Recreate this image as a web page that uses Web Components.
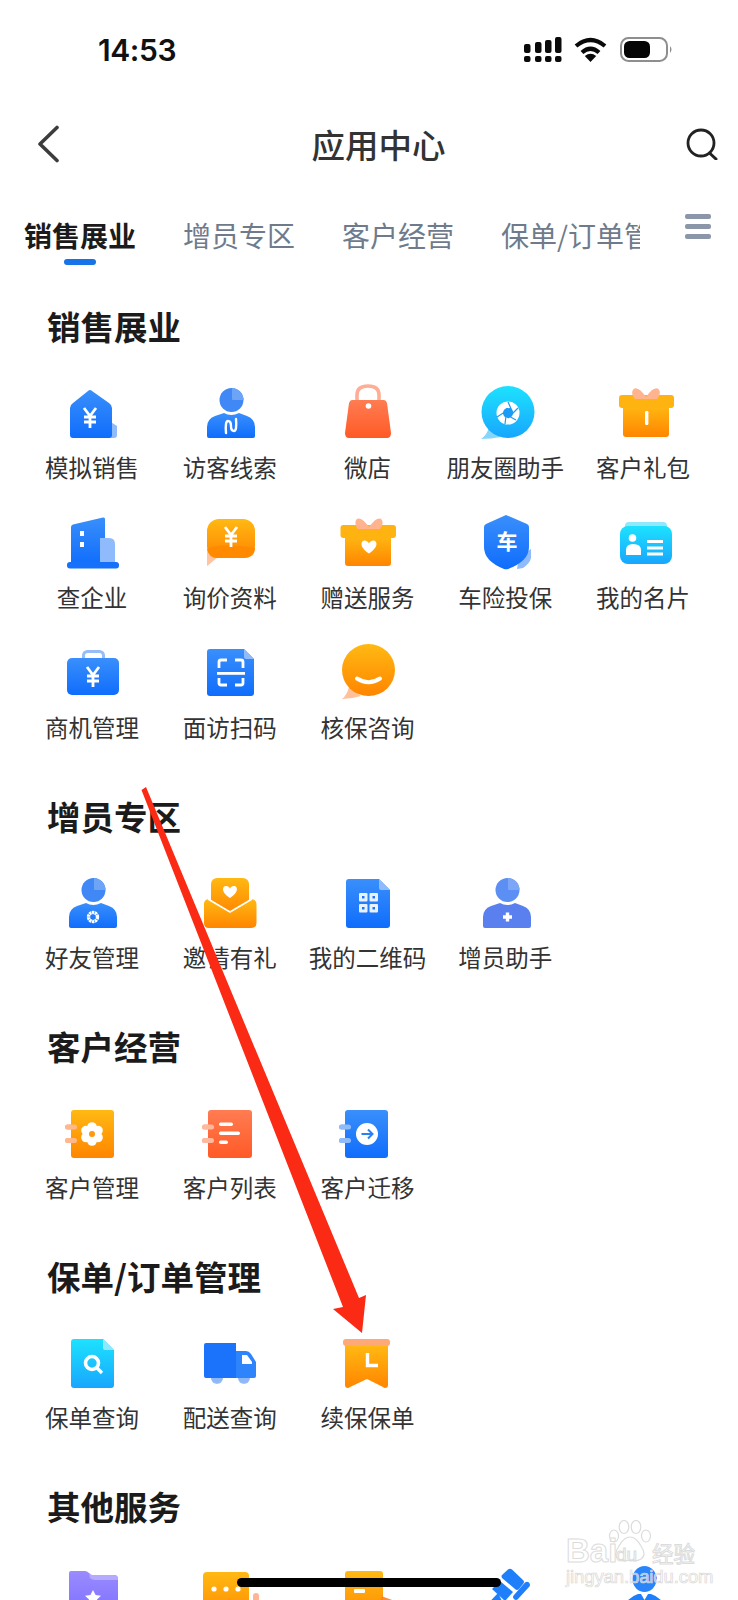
<!DOCTYPE html>
<html lang="zh-CN">
<head>
<meta charset="utf-8">
<title>应用中心</title>
<style>
  html, body { margin: 0; padding: 0; background: #fff; }
  body { width: 738px; height: 1600px; overflow: hidden; position: relative; font-family: "Noto Sans CJK SC", "Noto Sans", sans-serif; }
</style>
</head>
<body>
<app-status-bar time="14:53"></app-status-bar>
<app-nav heading="应用中心"></app-nav>
<app-tabs></app-tabs>

<app-section heading="销售展业">
  <app-item label="模拟销售" icon="house"></app-item>
  <app-item label="访客线索" icon="visitor"></app-item>
  <app-item label="微店" icon="bag"></app-item>
  <app-item label="朋友圈助手" icon="lens"></app-item>
  <app-item label="客户礼包" icon="gift"></app-item>
  <app-item label="查企业" icon="building"></app-item>
  <app-item label="询价资料" icon="quote"></app-item>
  <app-item label="赠送服务" icon="giftHeart"></app-item>
  <app-item label="车险投保" icon="shield"></app-item>
  <app-item label="我的名片" icon="card"></app-item>
  <app-item label="商机管理" icon="case"></app-item>
  <app-item label="面访扫码" icon="scan"></app-item>
  <app-item label="核保咨询" icon="smile"></app-item>
</app-section>
<app-section heading="增员专区">
  <app-item label="好友管理" icon="friend"></app-item>
  <app-item label="邀请有礼" icon="invite"></app-item>
  <app-item label="我的二维码" icon="qr"></app-item>
  <app-item label="增员助手" icon="recruit"></app-item>
</app-section>
<app-section heading="客户经营">
  <app-item label="客户管理" icon="noteGear"></app-item>
  <app-item label="客户列表" icon="noteList"></app-item>
  <app-item label="客户迁移" icon="noteMove"></app-item>
</app-section>
<app-section heading="保单/订单管理">
  <app-item label="保单查询" icon="policy"></app-item>
  <app-item label="配送查询" icon="truck"></app-item>
  <app-item label="续保保单" icon="renew"></app-item>
</app-section>
<app-section heading="其他服务">
  <app-item icon="folder"></app-item>
  <app-item icon="message"></app-item>
  <app-item icon="box"></app-item>
  <app-item icon="gavel"></app-item>
  <app-item icon="advisor"></app-item>
</app-section>

<app-arrow></app-arrow>
<app-watermark></app-watermark>
<app-home-bar></app-home-bar>

<script>
const defs = `<defs>
  <linearGradient id="b" x1="0" y1="0" x2="0" y2="1"><stop offset="0" stop-color="#3a8ffb"/><stop offset="1" stop-color="#0f6dfb"/></linearGradient>
  <linearGradient id="o" x1="0" y1="0" x2="0" y2="1"><stop offset="0" stop-color="#ffb913"/><stop offset="1" stop-color="#ff8500"/></linearGradient>
  <linearGradient id="c" x1="0" y1="0" x2="0" y2="1"><stop offset="0" stop-color="#1de2ff"/><stop offset="1" stop-color="#18a6fd"/></linearGradient>
  <linearGradient id="r" x1="0" y1="0" x2="0" y2="1"><stop offset="0" stop-color="#ff7c52"/><stop offset="1" stop-color="#ff5a26"/></linearGradient>
  <linearGradient id="p" x1="0" y1="0" x2="0" y2="1"><stop offset="0" stop-color="#9a8bff"/><stop offset="1" stop-color="#7a6cff"/></linearGradient>
</defs>`;

const yen = (x, y) => `<path d="M${x - 6} ${y - 10}L${x} ${y - 2}L${x + 6} ${y - 10}M${x - 6} ${y - 1}H${x + 6}M${x - 6} ${y + 4}H${x + 6}M${x} ${y - 2}V${y + 10}" fill="none" stroke="#fff" stroke-width="2.8"/>`;
const heart = (x, y, s) => `<path d="M${x} ${y + s * .85}C${x - s * 1.5} ${y - s * .1} ${x - s} ${y - s} ${x - s * .45} ${y - s * .85}C${x - s * .2} ${y - s * .8} ${x} ${y - s * .55} ${x} ${y - s * .45}C${x} ${y - s * .55} ${x + s * .2} ${y - s * .8} ${x + s * .45} ${y - s * .85}C${x + s} ${y - s} ${x + s * 1.5} ${y - s * .1} ${x} ${y + s * .85}Z" fill="#fff"/>`;
const head = (fill, pale) => `<ellipse cx="31.5" cy="19" rx="12" ry="12" fill="${fill}"/><path d="M32 7A12 12 0 0 1 43.5 19H33Q32 19 32 18Z" fill="${pale}"/>`;
const torso = fill => `<path d="M7 57V46Q7 38 15 35L24 32Q31 36 39 32L47 35Q55 38 55 46V55Q55 57 53 57H9Q7 57 7 55Z" fill="${fill}"/>`;
const paleBow = `<path d="M33 16Q24 4 20 9Q18 13 22 18H44Q48 13 46 9Q42 4 33 16Z" fill="#ffb48f"/>`;
const lid = `<rect x="4" y="14" width="55" height="13" rx="3" fill="#ffb311"/>`;
const ring = (c, x) => `<rect x="${x}" y="23.5" width="12" height="5" rx="2.5" fill="${c}"/><rect x="${x}" y="37" width="12" height="5" rx="2.5" fill="${c}"/>`;
const docBody = (grad, pale, x1, x2) => `<path d="M${x1 + 3} 8H${x2 - 11}L${x2} 19V54Q${x2} 57 ${x2 - 3} 57H${x1 + 3}Q${x1} 57 ${x1} 54V11Q${x1} 8 ${x1 + 3} 8Z" fill="url(#${grad})"/><path d="M${x2 - 11} 8L${x2} 19H${x2 - 9}Q${x2 - 11} 19 ${x2 - 11} 17Z" fill="${pale}"/>`;

const icons = {
  house: `<path d="M44 38L55 45V54Q55 57 52 57H44Z" fill="#8fbafb"/><path d="M26 10Q28 8 30 10L47 22Q50 24 50 27V54Q50 57 47 57H11Q8 57 8 54V27Q8 24 11 22Z" fill="url(#b)"/>${yen(28, 37)}`,
  visitor: `${head('#3f88f6', '#6da4f6')}${torso('url(#b)')}<path d="M26 52Q25 40 28 40Q31 40 31 45Q31 50 34 50Q37 50 36 38" fill="none" stroke="#fff" stroke-width="2.4" stroke-linecap="round"/>`,
  bag: `<path d="M20 24V14Q20 5 31 5Q42 5 42 14V24" fill="none" stroke="#ffae96" stroke-width="3.6"/><path d="M15 19H47Q49 19 50 22L54 52Q54 57 50 57H12Q8 57 8 52L12 22Q13 19 15 19Z" fill="url(#r)"/><circle cx="31.5" cy="25" r="2.8" fill="#fff"/>`,
  lens: `<path d="M6 58Q12 54 14 46L26 56Q16 58 6 58Z" fill="#86d6fb"/><ellipse cx="33" cy="31" rx="26.5" ry="26" fill="url(#c)"/><circle cx="33" cy="32" r="11.5" fill="#fff"/><circle cx="33" cy="32" r="5" fill="#1a9bf5"/><path d="M33 21L38 32M43 27L33 37M41 39L28 32M30 43L32 27M22 36L36 27" stroke="#1a9bf5" stroke-width="1.2" fill="none"/>`,
  gift: `${paleBow}<rect x="10" y="24" width="46" height="32" rx="3" fill="url(#o)"/><rect x="6" y="14" width="55" height="13" rx="3" fill="#ffb311"/>${paleBow}<rect x="32" y="30" width="3.4" height="14" rx="1.2" fill="#fff"/>`,
  building: `<path d="M9 16Q9 14 11 13.5L41 6.5Q43 6 43 8V54H9Z" fill="url(#b)"/><path d="M38 27H47Q53 27 53 33V54H38Z" fill="#8fbafb"/><rect x="5" y="51" width="52" height="6.5" rx="3" fill="#1570fb"/><rect x="18" y="20" width="4" height="5" fill="#fff"/><rect x="18" y="31" width="4" height="5" fill="#fff"/>`,
  quote: `<path d="M7 38L7 55Q8 54.500 18 46Z" fill="#ffc4a0"/><rect x="7" y="8" width="48" height="39" rx="12" fill="url(#o)"/><path d="M7 38Q20 31 55 37Q55 47 43 47H17Q9 47 7 38Z" fill="#ff8a00"/>${yen(31, 26)}`,
  giftHeart: `<rect x="8" y="24" width="46" height="31" rx="3" fill="url(#o)"/><rect x="3.500" y="14" width="55.500" height="13" rx="3" fill="#ffb311"/><path d="M32 16Q23 4 19 9Q17 13 21 18H43Q47 13 45 9Q41 4 32 16Z" fill="#ffb48f"/>${heart(32, 36, 7.5)}`,
  shield: `<path d="M44 46L56 38V47Q55 52 48 57L42 58Z" fill="#8fbafb"/><path d="M31 4L52 13Q54 14 54 16V36Q54 50 33 58Q31 58.500 29 58Q9 50 9 36V16Q9 14 11 13Z" fill="url(#b)"/><text x="32" y="38" text-anchor="middle" font-family="Noto Sans CJK SC" font-weight="700" font-size="21" fill="#fff">车</text>`,
  card: `<rect x="12" y="11" width="42" height="10" rx="4" fill="#8fe8fc"/><rect x="7" y="15" width="52" height="38" rx="8" fill="url(#c)"/><circle cx="19.500" cy="27" r="3.800" fill="#fff"/><path d="M13 44V39Q13 33 20 33Q28 33 28 39V44Z" fill="#fff"/><rect x="34" y="29" width="16" height="3" fill="#fff"/><rect x="34" y="35.500" width="16" height="3" fill="#fff"/><rect x="34" y="41.500" width="16" height="3" fill="#fff"/>`,
  case: `<rect x="21.500" y="10.500" width="20" height="12" rx="4" fill="none" stroke="#96bdf8" stroke-width="3"/><rect x="5" y="17" width="52" height="37" rx="5" fill="url(#b)"/>${yen(31, 36)}`,
  scan: `<path d="M10 8H44L54 18V52Q54 55 51 55H10Q7 55 7 52V11Q7 8 10 8Z" fill="url(#b)"/><path d="M44 8L54 18H46Q44 18 44 16Z" fill="#8fbafb"/><path d="M19 27V21Q19 19 21 19H27M35 19H41Q43 19 43 21V27M19 37V42Q19 44 21 44H27M35 44H41Q43 44 43 42V37" fill="none" stroke="#fff" stroke-width="2.800"/><rect x="17" y="31" width="28" height="2.800" fill="#fff"/>`,
  smile: `<path d="M5 58Q10 54 12 46L24 55Q14 58 5 58Z" fill="#ffc09a"/><ellipse cx="31.500" cy="29" rx="26.500" ry="26" fill="url(#o)"/><path d="M20 37.500Q31.500 45 43 37.500" fill="none" stroke="#fff" stroke-width="4" stroke-linecap="round"/>`,
  friend: `${head('#3f88f6', '#6da4f6')}${torso('url(#b)')}<circle cx="31" cy="46" r="4.500" fill="none" stroke="#fff" stroke-width="3.400" stroke-dasharray="2.300 .5"/>`,
  invite: `<rect x="11" y="7" width="38" height="36" rx="6" fill="url(#o)"/>${heart(30, 21, 7)}<path d="M4 33Q4 29 8 28L30 40.500L52 28Q56.500 29 56.500 33V52Q56.500 57 51 57H9Q4 57 4 52Z" fill="url(#o)"/><path d="M8 28L30 41L52 28" fill="none" stroke="#fff" stroke-width="1.800"/>`,
  qr: `${docBody('b', '#8fbafb', 9, 53)}<g fill="#e8f2ff"><rect x="22" y="22" width="8.500" height="8.500" rx="1"/><rect x="32.500" y="22" width="8.500" height="8.500" rx="1"/><rect x="22" y="33" width="8.500" height="8.500" rx="1"/><rect x="32.500" y="33" width="8.500" height="8.500" rx="1"/></g><g fill="#1c74fb"><rect x="25" y="25" width="2.500" height="2.500"/><rect x="35.500" y="25" width="2.500" height="2.500"/><rect x="25" y="36" width="2.500" height="2.500"/><rect x="35.500" y="36" width="2.500" height="2.500"/></g>`,
  recruit: `<g transform="translate(1)">${head('#5c8ff4', '#7da6f6')}${torso('#5a80f0')}</g><path d="M32.500 41.500V50.500M28 46H37" stroke="#fff" stroke-width="3.400"/>`,
  noteGear: `${ring('#ffb88c', 3)}<rect x="9" y="9" width="43" height="48" rx="3" fill="url(#o)"/>${ring('#ffb88c', 3)}<g fill="#fff"><circle cx="30" cy="26" r="4.800"/><circle cx="30" cy="40" r="4.800"/><circle cx="24" cy="29.500" r="4.800"/><circle cx="36" cy="29.500" r="4.800"/><circle cx="24" cy="36.500" r="4.800"/><circle cx="36" cy="36.500" r="4.800"/></g><circle cx="30" cy="33" r="3" fill="#ff9a10"/>`,
  noteList: `${ring('#ffb79d', 2)}<rect x="8" y="9" width="44" height="48" rx="3" fill="url(#r)"/>${ring('#ffb79d', 2)}<rect x="19" y="21.500" width="14" height="3.500" rx="1.700" fill="#fff"/><rect x="19" y="30.500" width="21" height="3.500" rx="1.700" fill="#fff"/><rect x="19" y="39.500" width="9" height="3.500" rx="1.700" fill="#fff"/>`,
  noteMove: `${ring('#8fbcf8', 2)}<rect x="8" y="9" width="43" height="48" rx="3" fill="url(#b)"/>${ring('#8fbcf8', 2)}<circle cx="30" cy="33" r="11" fill="#fff"/><path d="M24.500 33H35M31 28.500L35.500 33L31 37.500" fill="none" stroke="#2a7ff5" stroke-width="2"/>`,
  policy: `${docBody('c', '#8fe8fc', 9, 52)}<circle cx="30" cy="32" r="6.500" fill="none" stroke="#fff" stroke-width="3.600"/><path d="M35 37L40 42" stroke="#fff" stroke-width="3.400"/>`,
  truck: `<circle cx="17" cy="46" r="6" fill="#8fb8f8"/><circle cx="44" cy="46" r="6" fill="#8fb8f8"/><path d="M6 12H36V47H6Q4 47 4 45V14Q4 12 6 12Z" fill="#1b72fb"/><path d="M36 20H46Q49 20 51 23L56 31V45Q56 47 54 47H36Z" fill="#2e84fb"/><path d="M42 24H47L52 31V33H42Z" fill="#fff"/><g opacity=".85"><path d="M11 47A6 6 0 0 0 23 47Z" fill="#8fb8f8"/><path d="M38 47A6 6 0 0 0 50 47Z" fill="#8fb8f8"/></g>`,
  renew: `<path d="M8 14H51V54Q51 57 48 57Q47 57 46 56L30 48L13 56Q12 57 11 57Q8 57 8 54Z" fill="url(#o)"/><rect x="6" y="8" width="47" height="7" rx="3" fill="#ffa878"/><path d="M30.500 22V34.500H41" fill="none" stroke="#fff" stroke-width="3.400"/>`,
  folder: `<path d="M9 10H23Q25 10 27 12L29 14H52Q56 14 56 18V60H7V12Q7 10 9 10Z" fill="url(#p)"/><path d="M27 12L30 14H52Q56 14 56 18V19H33Q30 19 28 17Z" fill="#b5aaff"/><path d="M31 29L33.600 34L39 34.800L35 38.600L36 44L31 41.500L26 44L27 38.600L23 34.800L28.400 34Z" fill="#fff"/>`,
  message: `<rect x="53" y="32" width="6" height="30" rx="3" fill="#ffb595"/><rect x="3" y="11" width="46" height="52" rx="4" fill="url(#o)"/><circle cx="14" cy="28" r="2.600" fill="#fff"/><circle cx="26" cy="28" r="2.600" fill="#fff"/><circle cx="38" cy="28" r="2.600" fill="#fff"/>`,
  box: `<path d="M44 35L58 40V62H44Z" fill="#ff8a3c"/><rect x="8" y="10" width="38" height="52" rx="3" fill="url(#o)"/><path d="M46 34L30 62H46Z" fill="#ff7a20" opacity=".7"/><rect x="17" y="28" width="11" height="4" rx="1" fill="#fff"/>`,
  gavel: `<g fill="#1f7ffb"><path d="M33 8.500Q35 7 37 8.500L48 19Q50 21 48 23L44 28Q42 30 40 28L27 17Q26 15 27 14Z"/><path d="M25 20L38 31L30 40L17 28Z"/><path d="M50 21.500Q52 20 54 21.500Q56 24 54 26L43 38Q41 40 39 38Q37 36 39 34Z"/><path d="M23 32L6 50L14 60L28 42Z"/></g>`,
  advisor: `<path d="M20 16Q30 2 44 16L44 18H20Z" fill="#1f7ffb"/><ellipse cx="31.500" cy="18" rx="12" ry="13" fill="#2a85fb"/><path d="M7 60Q9 38 25 33H38Q54 38 56 60Z" fill="#1f7ffb"/><path d="M28 33H35L31.500 39Z" fill="#fff"/>`
};

class AppStatusBar extends HTMLElement {
  connectedCallback() {
    this.attachShadow({ mode: 'open' }).innerHTML = `<style>
      :host { display: flex; height: 100px; box-sizing: border-box; padding: 33px 65px 0 98px; justify-content: space-between; align-items: flex-start; }
      .time { font: 600 30px/34px Inter, "Liberation Sans", sans-serif; color: #111; letter-spacing: -.4px; }
      .icons { display: flex; gap: 12px; margin-top: 4px; }
      svg { display: block; }
    </style>
    <div class="time">${this.getAttribute('time')}</div>
    <div class="icons">
      <svg width="38" height="25" viewBox="0 0 38 25"><g fill="#0a0a0a">
        <rect x="0" y="7" width="6.500" height="9" rx="2"/><rect x="11" y="5" width="6.500" height="11" rx="2"/><rect x="21" y="3" width="6.500" height="13" rx="2"/><rect x="31" y="0" width="6.500" height="16" rx="2"/>
        <rect x="0" y="19" width="6.500" height="6" rx="2"/><rect x="11" y="19" width="6.500" height="6" rx="2"/><rect x="21" y="19" width="6.500" height="6" rx="2"/><rect x="31" y="19" width="6.500" height="6" rx="2"/>
      </g></svg>
      <svg width="33" height="25" viewBox="0 0 33 25"><g fill="none" stroke="#0a0a0a" stroke-width="4.200"><path d="M2 9Q16.500 -3 31 9"/><path d="M8 15.500Q16.500 8 25 15.500"/></g><path d="M10.800 19Q16.500 14.500 22.200 19L16.500 25Z" fill="#0a0a0a"/></svg>
      <svg width="53" height="25" viewBox="0 0 53 25" style="margin-left:1px"><rect x="1" y="1" width="46" height="23" rx="7.500" fill="none" stroke="#8e8e8e" stroke-width="2"/><rect x="4" y="4" width="26" height="17" rx="5.500" fill="#050505"/><path d="M50 9Q53 12.500 50 16Z" fill="#8e8e8e"/></svg>
    </div>`;
  }
}

class AppNav extends HTMLElement {
  connectedCallback() {
    this.attachShadow({ mode: 'open' }).innerHTML = `<style>
      :host { display: grid; grid-template-columns: 1fr auto 1fr; align-items: center; height: 88px; padding: 0 20px 0 36px; box-sizing: border-box; }
      h1 { margin: 0; font: 500 33.500px/44px "Noto Sans CJK SC", sans-serif; color: #333; padding-left: 3px; }
      svg { display: block; }
      .search { justify-self: end; }
    </style>
    <svg width="24" height="38" viewBox="0 0 24 38"><path d="M21 2.500L4 19L21 35.500" fill="none" stroke="#3c3c3c" stroke-width="3.600" stroke-linecap="round" stroke-linejoin="round"/></svg>
    <h1>${this.getAttribute('heading')}</h1>
    <svg class="search" width="32" height="32" viewBox="0 0 32 32"><circle cx="15" cy="15" r="13" fill="none" stroke="#222" stroke-width="2.800"/><path d="M23.500 25L30 31" stroke="#222" stroke-width="3" stroke-linecap="round"/></svg>`;
  }
}

class AppTabs extends HTMLElement {
  connectedCallback() {
    const tabs = ['销售展业', '增员专区', '客户经营', '保单/订单管理', '其他服务'];
    this.attachShadow({ mode: 'open' }).innerHTML = `<style>
      :host { display: flex; height: 92px; margin-bottom: 23px; box-sizing: border-box; }
      .track { width: 640px; flex: none; overflow: hidden; display: flex; gap: 47px; padding-left: 24px; box-sizing: border-box; white-space: nowrap; }
      .tab { flex: none; font: 400 28px/40px "Noto Sans CJK SC", sans-serif; color: #6f7b8b; padding-top: 27px; position: relative; }
      .tab.on { color: #1b1b1b; font-weight: 700; }
      .tab.on::after { content: ""; position: absolute; left: 40px; top: 71px; width: 32px; height: 6px; border-radius: 3px; background: #1673e8; }
      .menu { display: flex; flex-direction: column; gap: 5.500px; margin: 26px 0 0 45px; }
      .menu span { width: 26px; height: 4.500px; border-radius: 2px; background: #8b96a8; }
    </style>
    <div class="track">${tabs.map((t, i) => `<div class="tab${i === 0 ? ' on' : ''}">${t}</div>`).join('')}</div>
    <div class="menu"><span></span><span></span><span></span></div>`;
  }
}

class AppSection extends HTMLElement {
  connectedCallback() {
    this.attachShadow({ mode: 'open' }).innerHTML = `<style>
      :host { display: block; padding-bottom: 50px; }
      h2 { margin: 0 0 32px 47px; font: 700 33.500px/46px "Noto Sans CJK SC", sans-serif; color: #1b1b1b; }
      .grid { display: grid; grid-template-columns: repeat(5, 137.800px); row-gap: 28px; padding-left: 23px; }
    </style>
    <h2>${this.getAttribute('heading')}</h2>
    <div class="grid"><slot></slot></div>`;
  }
}

class AppItem extends HTMLElement {
  connectedCallback() {
    const label = this.getAttribute('label');
    this.attachShadow({ mode: 'open' }).innerHTML = `<style>
      :host { display: flex; flex-direction: column; align-items: center; height: 102px; }
      svg { display: block; flex: none; overflow: visible; }
      span { margin-top: 10px; font: 400 23.500px/32px "Noto Sans CJK SC", sans-serif; color: #333; white-space: nowrap; }
    </style>
    <svg width="60" height="60" viewBox="0 0 60 60">${defs}${icons[this.getAttribute('icon')]}</svg>
    ${label ? `<span>${label}</span>` : ''}`;
  }
}

// the red arrow drawn over the screenshot
class AppArrow extends HTMLElement {
  connectedCallback() {
    this.attachShadow({ mode: 'open' }).innerHTML = `<style>
      :host { position: absolute; left: 0; top: 0; width: 738px; height: 1600px; pointer-events: none; }
      svg { display: block; }
    </style>
    <svg width="738" height="1600" viewBox="0 0 738 1600"><path d="M141.500 790L146 787L359 1298L366 1295L362 1333L333 1309L343 1307Z" fill="#fb2a14"/></svg>`;
  }
}

class AppWatermark extends HTMLElement {
  connectedCallback() {
    this.attachShadow({ mode: 'open' }).innerHTML = `<style>
      :host { position: absolute; left: 566px; top: 1520px; width: 135px; height: 64px; color: #fff; font-family: "Liberation Sans", sans-serif; pointer-events: none; }
      div { position: absolute; white-space: nowrap; -webkit-text-stroke: 1px #dcdcdc; color: rgba(255,255,255,.55); }
      .bai { left: 0; top: 14px; font: 700 33px/34px "Liberation Sans", sans-serif; }
      .du { left: 50px; top: 24px; font: 400 19px/22px "Liberation Sans", sans-serif; }
      .jy { left: 86px; top: 20px; font: 400 21.500px/26px "Noto Sans CJK SC", sans-serif; }
      .url { left: 0; top: 47px; font: 400 18.500px/20px "Liberation Sans", sans-serif; -webkit-text-stroke: .7px #d8d8d8; letter-spacing: -.1px; }
      svg { position: absolute; left: 42px; top: 0; }
    </style>
    <svg width="46" height="46" viewBox="0 0 46 46"><g fill="rgba(255,255,255,.5)" stroke="#dcdcdc" stroke-width="1.200"><ellipse cx="6" cy="16" rx="4.500" ry="6"/><ellipse cx="16" cy="7" rx="4.800" ry="6.500"/><ellipse cx="28" cy="7" rx="4.800" ry="6.500"/><ellipse cx="38" cy="16" rx="4.500" ry="6"/><path d="M22 17Q28 17 33 26Q39 35 33 39Q28 42 22 40Q15 42 10 39Q5 35 11 26Q16 17 22 17Z"/></g></svg>
    <div class="bai">Bai</div><div class="du">du</div><div class="jy">经验</div><div class="url">jingyan.baidu.com</div>`;
  }
}

class AppHomeBar extends HTMLElement {
  connectedCallback() {
    this.attachShadow({ mode: 'open' }).innerHTML = `<style>
      :host { position: absolute; left: 237px; top: 1578px; width: 264px; height: 9px; border-radius: 5px; background: #000; }
    </style>`;
  }
}

customElements.define('app-status-bar', AppStatusBar);
customElements.define('app-nav', AppNav);
customElements.define('app-tabs', AppTabs);
customElements.define('app-section', AppSection);
customElements.define('app-item', AppItem);
customElements.define('app-arrow', AppArrow);
customElements.define('app-watermark', AppWatermark);
customElements.define('app-home-bar', AppHomeBar);
</script>
</body>
</html>
